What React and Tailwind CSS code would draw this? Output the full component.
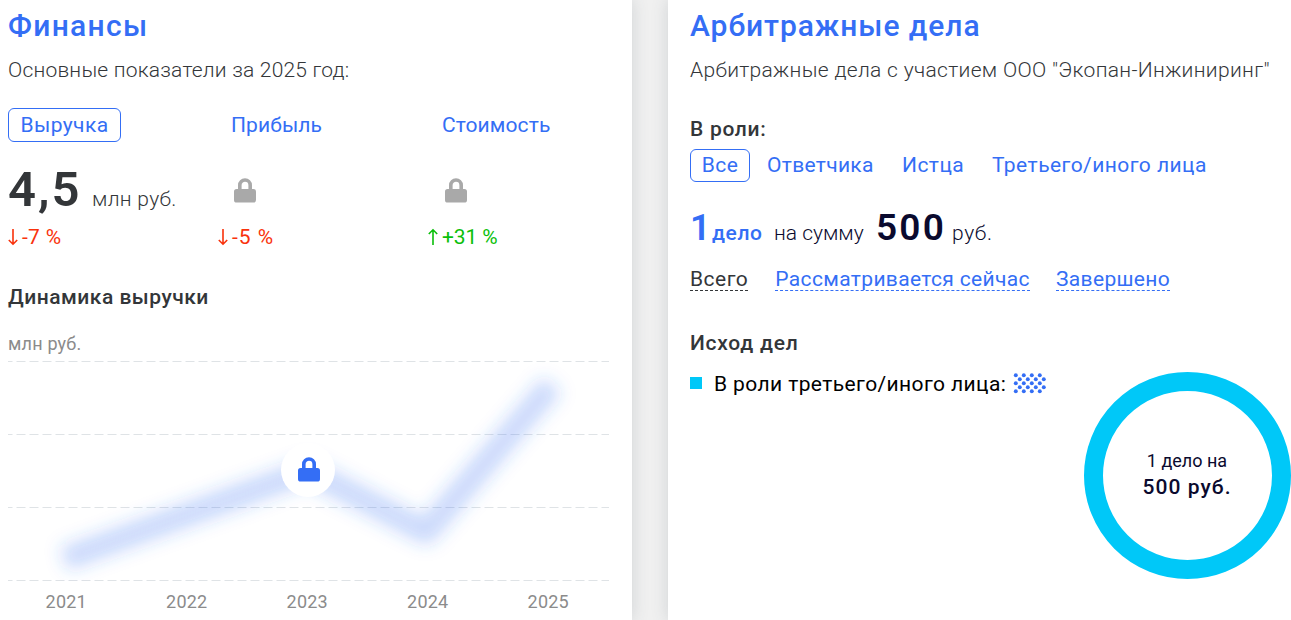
import React from 'react';

const metrics = [
  { id: 'revenue', change: '-7 %', arrow: '↓', color: 'text-[#f9320c]', tracking: 'tracking-[0.3px]' },
  { id: 'profit', change: '-5 %', arrow: '↓', color: 'text-[#f9320c]', tracking: 'tracking-[1px]' },
  { id: 'price', change: '+31 %', arrow: '↑', color: 'text-[#0abf0a]', tracking: 'tracking-[-0.1px]' }
];

const years = ['2021', '2022', '2023', '2024', '2025'];
const gridLines = [0.5, 73.5, 146.5, 219.5];

const LockIcon = ({ className }) => (
  <svg viewBox="0 0 22 25" width="22" height="25" className={className}>
    <path d="M5.8 12V7.2a5.2 5.2 0 0 1 10.4 0V12" fill="none" stroke="currentColor" strokeWidth="3.6" />
    <rect x="0" y="11" width="22" height="13.5" rx="2.6" fill="currentColor" />
  </svg>
);

const ArrowIcon = ({ up }) => (
  <svg viewBox="0 0 10 18" width="10" height="18" className={up ? 'rotate-180' : ''}>
    <path d="M5 1v15M.8 12l4.2 4.2L9.2 12" fill="none" stroke="currentColor" strokeWidth="1.6" />
  </svg>
);

const RevenueChart = () => (
  <div className="relative w-[601px]">
    <svg width="601" height="220" viewBox="0 0 601 220" className="block">
      <defs>
        <filter id="soft" x="-20%" y="-30%" width="140%" height="160%">
          <feGaussianBlur stdDeviation="8.5" />
        </filter>
      </defs>
      {gridLines.map((y) => (
        <line key={y} x1="0" x2="601" y1={y} y2={y} stroke="#dfe3e6" strokeDasharray="9 4" strokeDashoffset="4.5" />
      ))}
      <path
        d="M56 198L300 110L418 171L544 24"
        fill="none"
        stroke="#346ef5"
        strokeOpacity="0.26"
        strokeWidth="24"
        strokeLinejoin="round"
        filter="url(#soft)"
      />
    </svg>
    <div className="absolute left-[273px] top-[82px] flex h-[54px] w-[54px] items-center justify-center rounded-full bg-white">
      <LockIcon className="ml-px mb-px text-[#346ef5]" />
    </div>
    <div className="-ml-0.5 flex w-[603px] pt-2.5 text-[18px] leading-[22px] tracking-[0.2px] text-[#8b8b8b]">
      {years.map((year) => (
        <span key={year} className="w-[120.5px] text-center">{year}</span>
      ))}
    </div>
  </div>
);

const FinancePanel = () => (
  <section className="h-[620px] w-[632px] shrink-0 bg-white pl-2 shadow-[0_0_16px_rgba(60,80,90,0.18)]">
    <h2 className="h-[52px] text-[30px] leading-[52px] font-medium tracking-[1.3px] text-[#346ef5]">Финансы</h2>
    <p className="h-9 text-[21px] leading-9 font-light tracking-[0.2px]">Основные показатели за 2025 год:</p>
    <div className="mt-5 flex h-[34px] text-[21px] leading-[32px] tracking-[0.1px] text-[#346ef5]">
      <div className="w-[223px]">
        <button className="h-[34px] w-[113px] rounded-[6px] border border-[#346ef5] tracking-[0.4px]">Выручка</button>
      </div>
      <span className="w-[211px] pt-px">Прибыль</span>
      <span className="pt-px">Стоимость</span>
    </div>
    <div className="mt-4 flex h-[64px] items-center">
      <div className="flex w-[226px] items-baseline">
        <span className="w-[84px] text-[49px] leading-[64px] font-semibold tracking-[2px]">4,5</span>
        <span className="text-[21px] font-light tracking-[0.3px]">млн руб.</span>
      </div>
      <LockIcon className="mr-[189px] text-[#a9a9a9]" />
      <LockIcon className="text-[#a9a9a9]" />
    </div>
    <div className="flex h-[30px] text-[21px] leading-[30px]">
      {metrics.map((m) => (
        <div key={m.id} className={`flex w-[210px] shrink-0 items-center gap-1 ${m.color}`}>
          <ArrowIcon up={m.arrow === '↑'} />
          <span className={m.tracking}>{m.change}</span>
        </div>
      ))}
    </div>
    <h3 className="mt-[30px] h-[30px] text-[21px] leading-[30px] font-medium tracking-[0.5px]">Динамика выручки</h3>
    <p className="mt-5 h-[29px] text-[18px] leading-6 tracking-[0.2px] text-[#8b8b8b]">млн руб.</p>
    <RevenueChart />
  </section>
);

const DotsIcon = () => (
  <svg width="33" height="21" viewBox="0 0 33 21" className="text-[#346ef5]">
    {[0, 1, 2, 3, 4].map((row) =>
      [0, 1, 2, 3].map((col) => (
        <circle key={`${row}-${col}`} cx={2.8 + col * 8 + (row % 2) * 4} cy={2.2 + row * 4} r="1.95" fill="currentColor" />
      ))
    )}
  </svg>
);

const CourtPanel = () => (
  <section className="h-[620px] flex-1 bg-white pl-[22px] shadow-[0_0_16px_rgba(60,80,90,0.18)]">
    <h2 className="h-[52px] text-[30px] leading-[52px] font-medium tracking-[0.95px] text-[#346ef5]">Арбитражные дела</h2>
    <p className="h-9 text-[21px] leading-9 font-light tracking-[0.32px]">Арбитражные дела с участием ООО "Экопан-Инжиниринг"</p>
    <h3 className="mt-[26px] h-[30px] text-[21px] leading-[30px] font-medium tracking-[0.7px]">В роли:</h3>
    <div className="mt-[5px] flex h-[33px] text-[21px] leading-[31px] tracking-[0.45px] text-[#346ef5]">
      <button className="mr-[17px] h-[33px] w-[60px] rounded-[6px] border border-[#346ef5]">Все</button>
      <span className="w-[135px] pt-px tracking-[0.3px]">Ответчика</span>
      <span className="w-[90px] pt-px">Истца</span>
      <span className="pt-px">Третьего/иного лица</span>
    </div>
    <div className="mt-6 flex h-[44px] items-baseline text-[21px] leading-[44px] text-[#0a0a2e]">
      <span className="w-[22px] text-[36px] font-semibold text-[#346ef5]">1</span>
      <span className="w-[62px] font-medium tracking-[0.6px] text-[#346ef5]">дело</span>
      <span className="w-[102px] font-light">на сумму</span>
      <span className="w-[76px] text-[37px] font-semibold tracking-[2.2px]">500</span>
      <span className="font-light tracking-[0.6px]">руб.</span>
    </div>
    <div className="mt-[18px] flex h-[23px] text-[21px] leading-[22px] tracking-[0.35px] text-[#346ef5]">
      <span className="mr-[27px] border-b border-dashed tracking-[0.5px] text-[#333639]">Всего</span>
      <span className="mr-[26px] border-b border-dashed">Рассматривается сейчас</span>
      <span className="border-b border-dashed">Завершено</span>
    </div>
    <h3 className="mt-[37px] h-[30px] text-[21px] leading-[30px] font-medium tracking-[0.75px]">Исход дел</h3>
    <div className="flex">
      <div className="mt-[9px] flex h-[30px] w-[393.5px] items-center pt-0.5 text-[21px] text-black">
        <span className="mr-3 size-3 bg-[#00c8f8]" />
        <span className="w-[299px] pt-[3px] tracking-[0.4px]">В роли третьего/иного лица:</span>
        <DotsIcon />
      </div>
      <div className="mt-[13.5px] flex h-[207px] w-[207px] shrink-0 flex-col items-center justify-center rounded-full border-[19.5px] border-[#00c8f8] pb-[2px] text-[#0a0a2e]">
        <span className="text-[18px] leading-[26px]">1 дело на</span>
        <span className="text-[21px] leading-[26px] font-medium tracking-[1.05px]">500 руб.</span>
      </div>
    </div>
  </section>
);

export default function App() {
  return (
    <main className="flex h-[620px] w-[1291px] gap-9 overflow-hidden bg-[#f0f0f0] font-['Roboto',sans-serif] whitespace-nowrap text-[#333639]">
      <FinancePanel />
      <CourtPanel />
    </main>
  );
}
